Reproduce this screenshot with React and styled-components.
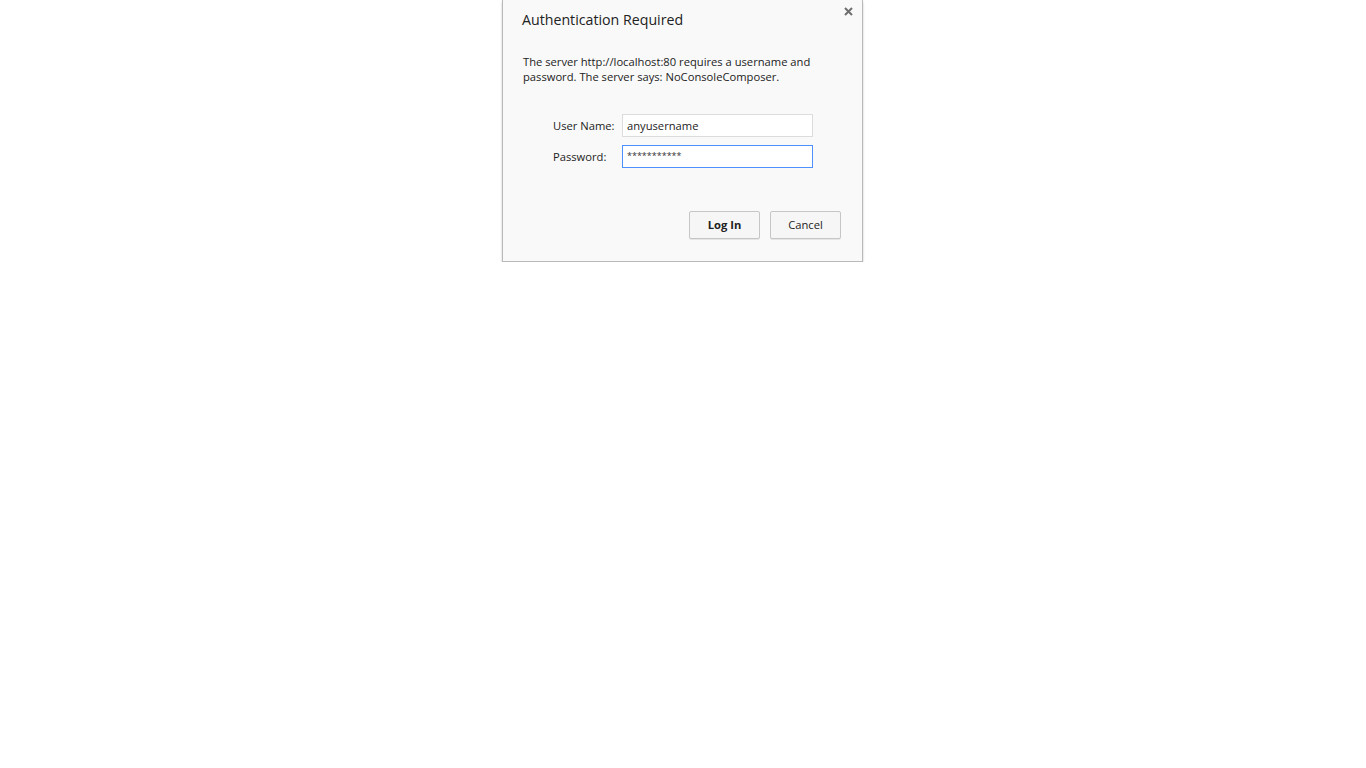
import React from "react";
import styled, { createGlobalStyle } from "styled-components";

const GlobalStyle = createGlobalStyle`
  html, body {
    margin: 0;
    padding: 0;
    background: #ffffff;
  }
  body {
    font-family: "Open Sans", "Noto Sans", sans-serif;
  }
`;

const App = () => {
  return (
    <>
      <GlobalStyle />
      <Dialog>
        <Close aria-label="Close">
          <svg width="9" height="9" viewBox="0 0 9 9">
            <path d="M1 1 L8 8 M8 1 L1 8" stroke="#6f6f6f" strokeWidth="2" />
          </svg>
        </Close>
        <Title>Authentication Required</Title>
        <Message>
          The server http://localhost:80 requires a username and
          <br />
          password. The server says: NoConsoleComposer.
        </Message>
        <Form>
          <Label>User Name:</Label>
          <Field type="text" defaultValue="anyusername" />
          <Label>Password:</Label>
          <ActiveField type="text" defaultValue="***********" />
        </Form>
        <Actions>
          <Button $primary>Log In</Button>
          <Button>Cancel</Button>
        </Actions>
      </Dialog>
    </>
  );
};

export default App;

const Dialog = styled.div`
  position: relative;
  width: 359px;
  margin: 0 0 0 calc(50% - 181px);
  box-sizing: content-box;
  background: #f9f9f9;
  border: 1px solid #b9b9b9;
  border-top: none;
  box-shadow: 0 2px 2px rgba(0, 0, 0, 0.22);
  padding: 10px 0 22px 0;
  color: #222;
`;

const Close = styled.button`
  position: absolute;
  top: 6px;
  right: 8px;
  width: 11px;
  height: 11px;
  padding: 0;
  border: none;
  background: transparent;
  display: flex;
  align-items: center;
  justify-content: center;
`;

const Title = styled.div`
  margin-left: 19px;
  font-size: 14.2px;
  line-height: 20px;
  color: #222;
`;

const Message = styled.div`
  margin: 24px 0 0 20px;
  font-size: 11.2px;
  line-height: 15px;
  color: #222;
`;

const Form = styled.div`
  display: grid;
  grid-template-columns: 69px 191px;
  row-gap: 8px;
  align-items: center;
  margin: 30px 0 0 50px;
`;

const Label = styled.label`
  font-size: 11.2px;
  color: #222;
`;

const Field = styled.input`
  box-sizing: border-box;
  width: 191px;
  height: 23px;
  padding: 0 4px;
  font-family: "Open Sans", "Noto Sans", sans-serif;
  font-size: 11.2px;
  color: #222;
  background: #fff;
  outline: none;
  border: 1px solid #dcdcdc;
`;

const ActiveField = styled(Field)`
  border-color: #4d90fe;
  color: #333;
  font-size: 9px;
  padding-bottom: 3px;
`;

const Actions = styled.div`
  display: flex;
  justify-content: flex-end;
  gap: 10px;
  margin: 43px 21px 0 0;
`;

const Button = styled.button`
  box-sizing: border-box;
  width: 71px;
  height: 28px;
  font-family: "Open Sans", "Noto Sans", sans-serif;
  font-size: 11.2px;
  font-weight: ${(p) => (p.$primary ? 700 : 400)};
  color: #222;
  background: #f6f6f6;
  border: 1px solid #c6c6c6;
  border-radius: 2px;
  box-shadow: 0 1px 0 rgba(0, 0, 0, 0.08);
  padding: 0 0 2px 0;
`;
